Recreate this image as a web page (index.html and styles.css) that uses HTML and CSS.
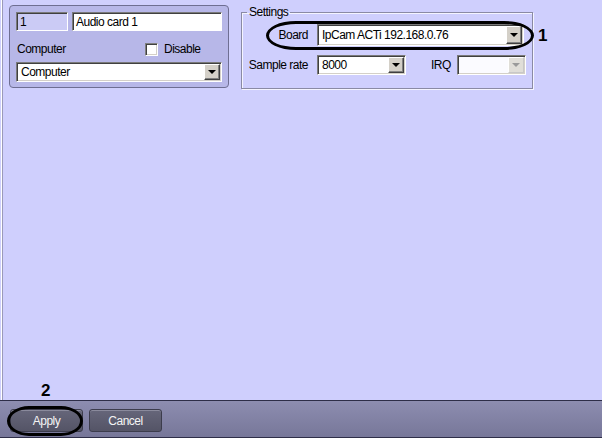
FILE: index.html
```html
<!DOCTYPE html>
<html>
<head>
<meta charset="utf-8">
<link rel="stylesheet" href="styles.css">
</head>
<body>
<div class="window">
  <div class="content">
    <div class="top">
      <div class="card">
        <div class="row-names">
          <div class="field id-field">1</div>
          <div class="field name-field">Audio card 1</div>
        </div>
        <div class="row-check">
          <span class="lbl-computer">Computer</span>
          <span class="checkbox"></span>
          <span class="lbl-disable">Disable</span>
        </div>
        <div class="combo combo-computer">
          <span class="combo-text">Computer</span>
          <span class="combo-btn"><span class="tri"></span></span>
        </div>
      </div>
      <fieldset class="settings">
        <legend>Settings</legend>
        <div class="srow srow-board">
          <span class="slabel">Board</span>
          <div class="combo combo-board">
            <span class="combo-text">IpCam ACTi 192.168.0.76</span>
            <span class="combo-btn"><span class="tri"></span></span>
          </div>
        </div>
        <div class="srow srow-rate">
          <span class="slabel">Sample rate</span>
          <div class="combo combo-rate">
            <span class="combo-text">8000</span>
            <span class="combo-btn"><span class="tri"></span></span>
          </div>
          <span class="irq-label">IRQ</span>
          <div class="combo combo-irq disabled">
            <span class="combo-text"></span>
            <span class="combo-btn"><span class="tri"></span></span>
          </div>
        </div>
      </fieldset>
    </div>
  </div>
  <div class="bottombar">
    <button class="btn">Apply</button>
    <button class="btn">Cancel</button>
  </div>
  <div class="mark mark-board"></div>
  <div class="num num-1">1</div>
  <div class="num num-2">2</div>
  <div class="mark mark-apply"></div>
</div>
</body>
</html>
```

FILE: styles.css
```css
html, body {
  margin: 0;
  padding: 0;
}
body {
  width: 602px;
  height: 438px;
  overflow: hidden;
  background: #cfcffd;
  font-family: "Liberation Sans", Arial, sans-serif;
  font-size: 12px;
  letter-spacing: -0.5px;
  color: #000;
}
.window {
  position: relative;
  width: 602px;
  height: 438px;
  display: flex;
  flex-direction: column;
}
.content {
  height: 400px;
  box-sizing: border-box;
  border-left: 1px solid #fff;
  box-shadow: inset 1px 0 0 #9a9ab8;
  margin-left: 1px;
}
.top {
  display: flex;
  align-items: flex-start;
  padding: 5px 0 0 7px;
}
.card {
  width: 220px;
  height: 83px;
  box-sizing: border-box;
  border: 1px solid #6e6e92;
  border-radius: 4px;
  background: #b7b7e8;
  padding: 6px 6px 5px 6px;
  display: flex;
  flex-direction: column;
}
.row-names {
  display: flex;
  gap: 4px;
}
.field {
  height: 19px;
  box-sizing: border-box;
  border-top: 1px solid #7a7a7a;
  border-left: 1px solid #7a7a7a;
  border-right: 1px solid #fff;
  border-bottom: 1px solid #fff;
  box-shadow: inset 1px 1px 0 #404040;
  padding: 1px 0 0 3px;
  line-height: 16px;
  white-space: nowrap;
}
.id-field {
  width: 52px;
  background: #cbcbf5;
}
.name-field {
  width: 150px;
  background: #fff;
}
.row-check {
  display: flex;
  align-items: center;
  height: 20px;
  margin-top: 8px;
}
.lbl-computer {
  width: 128px;
  padding-left: 1px;
}
.checkbox {
  width: 13px;
  height: 13px;
  box-sizing: border-box;
  background: #fff;
  border-top: 1px solid #808080;
  border-left: 1px solid #808080;
  border-right: 1px solid #fff;
  border-bottom: 1px solid #fff;
  box-shadow: inset 1px 1px 0 #404040, inset -1px -1px 0 #d4d0c8;
}
.lbl-disable {
  margin-left: 6px;
}
.combo {
  display: flex;
  box-sizing: border-box;
  height: 20px;
  background: #fff;
  border-top: 1px solid #7a7a7a;
  border-left: 1px solid #7a7a7a;
  border-right: 1px solid #fff;
  border-bottom: 1px solid #fff;
  box-shadow: inset 1px 1px 0 #404040, inset -1px -1px 0 #d4d0c8;
  padding: 1px;
}
.combo-computer {
  margin-top: 3px;
  width: 206px;
}
.combo-text {
  flex: 1;
  padding-left: 3px;
  line-height: 16px;
  white-space: nowrap;
}
.combo-btn {
  width: 16px;
  box-sizing: border-box;
  background: #d4d0c8;
  border-top: 1px solid #fff;
  border-left: 1px solid #fff;
  border-right: 1px solid #404040;
  border-bottom: 1px solid #404040;
  box-shadow: inset -1px -1px 0 #808080;
  display: flex;
  align-items: center;
  justify-content: center;
}
.tri {
  width: 0;
  height: 0;
  border-left: 4px solid transparent;
  border-right: 4px solid transparent;
  border-top: 4px solid #000;
  margin-right: 1px;
}
.disabled {
  background: #fbfbff;
}
.disabled .combo-btn {
  background: #e0ded8;
  border-right-color: #c8c8c8;
  border-bottom-color: #c8c8c8;
  box-shadow: none;
}
.disabled .tri {
  border-top-color: #9a9a9a;
}
.settings {
  margin: 0 0 0 12px;
  width: 292px;
  height: 84px;
  box-sizing: border-box;
  border: 1px solid #8a8aa4;
  box-shadow: 1px 1px 0 #f4f4ff, inset 1px 1px 0 #f4f4ff;
  padding: 5px 0 0 0;
  min-width: 0;
}
.settings legend {
  padding: 0 2px;
  margin-left: 5px;
  line-height: 14px;
}
.srow {
  display: flex;
  align-items: center;
}
.slabel {
  width: 66px;
  text-align: right;
  margin-right: 9px;
  white-space: nowrap;
}
.combo-board {
  width: 207px;
  height: 22px;
}
.combo-board .combo-text {
  line-height: 18px;
}
.srow-rate {
  margin-top: 9px;
}
.combo-rate {
  width: 89px;
}
.irq-label {
  margin-left: 25px;
  width: 26px;
}
.combo-irq {
  width: 69px;
}
.mark {
  position: absolute;
  box-sizing: border-box;
  border: 3px solid #000;
}
.mark-board {
  left: 266px;
  top: 21px;
  width: 268px;
  height: 29px;
  border-radius: 30px / 14.5px;
}
.num {
  position: absolute;
  font-weight: bold;
  font-size: 17px;
  line-height: 17px;
  letter-spacing: 0;
}
.num-1 {
  left: 538px;
  top: 27px;
}
.num-2 {
  left: 41px;
  top: 382px;
}
.bottombar {
  height: 38px;
  box-sizing: border-box;
  border-top: 1px solid #2e2e48;
  border-bottom: 1px solid #2e2e48;
  background: linear-gradient(#8d8db0, #777799);
  display: flex;
  align-items: flex-start;
  gap: 6px;
  padding: 8px 0 0 10px;
}
.btn {
  width: 73px;
  height: 23px;
  box-sizing: border-box;
  border: 1px solid #3c3c4c;
  border-radius: 3px;
  background: linear-gradient(#66667a, #545466);
  box-shadow: inset 0 1px 0 #8a8a9c;
  color: #f4f4f4;
  font-family: "Liberation Sans", Arial, sans-serif;
  font-size: 12px;
  letter-spacing: -0.5px;
  padding: 0;
}
.mark-apply {
  left: 7px;
  top: 406px;
  width: 76px;
  height: 30px;
  border-radius: 22px / 15px;
}
```
